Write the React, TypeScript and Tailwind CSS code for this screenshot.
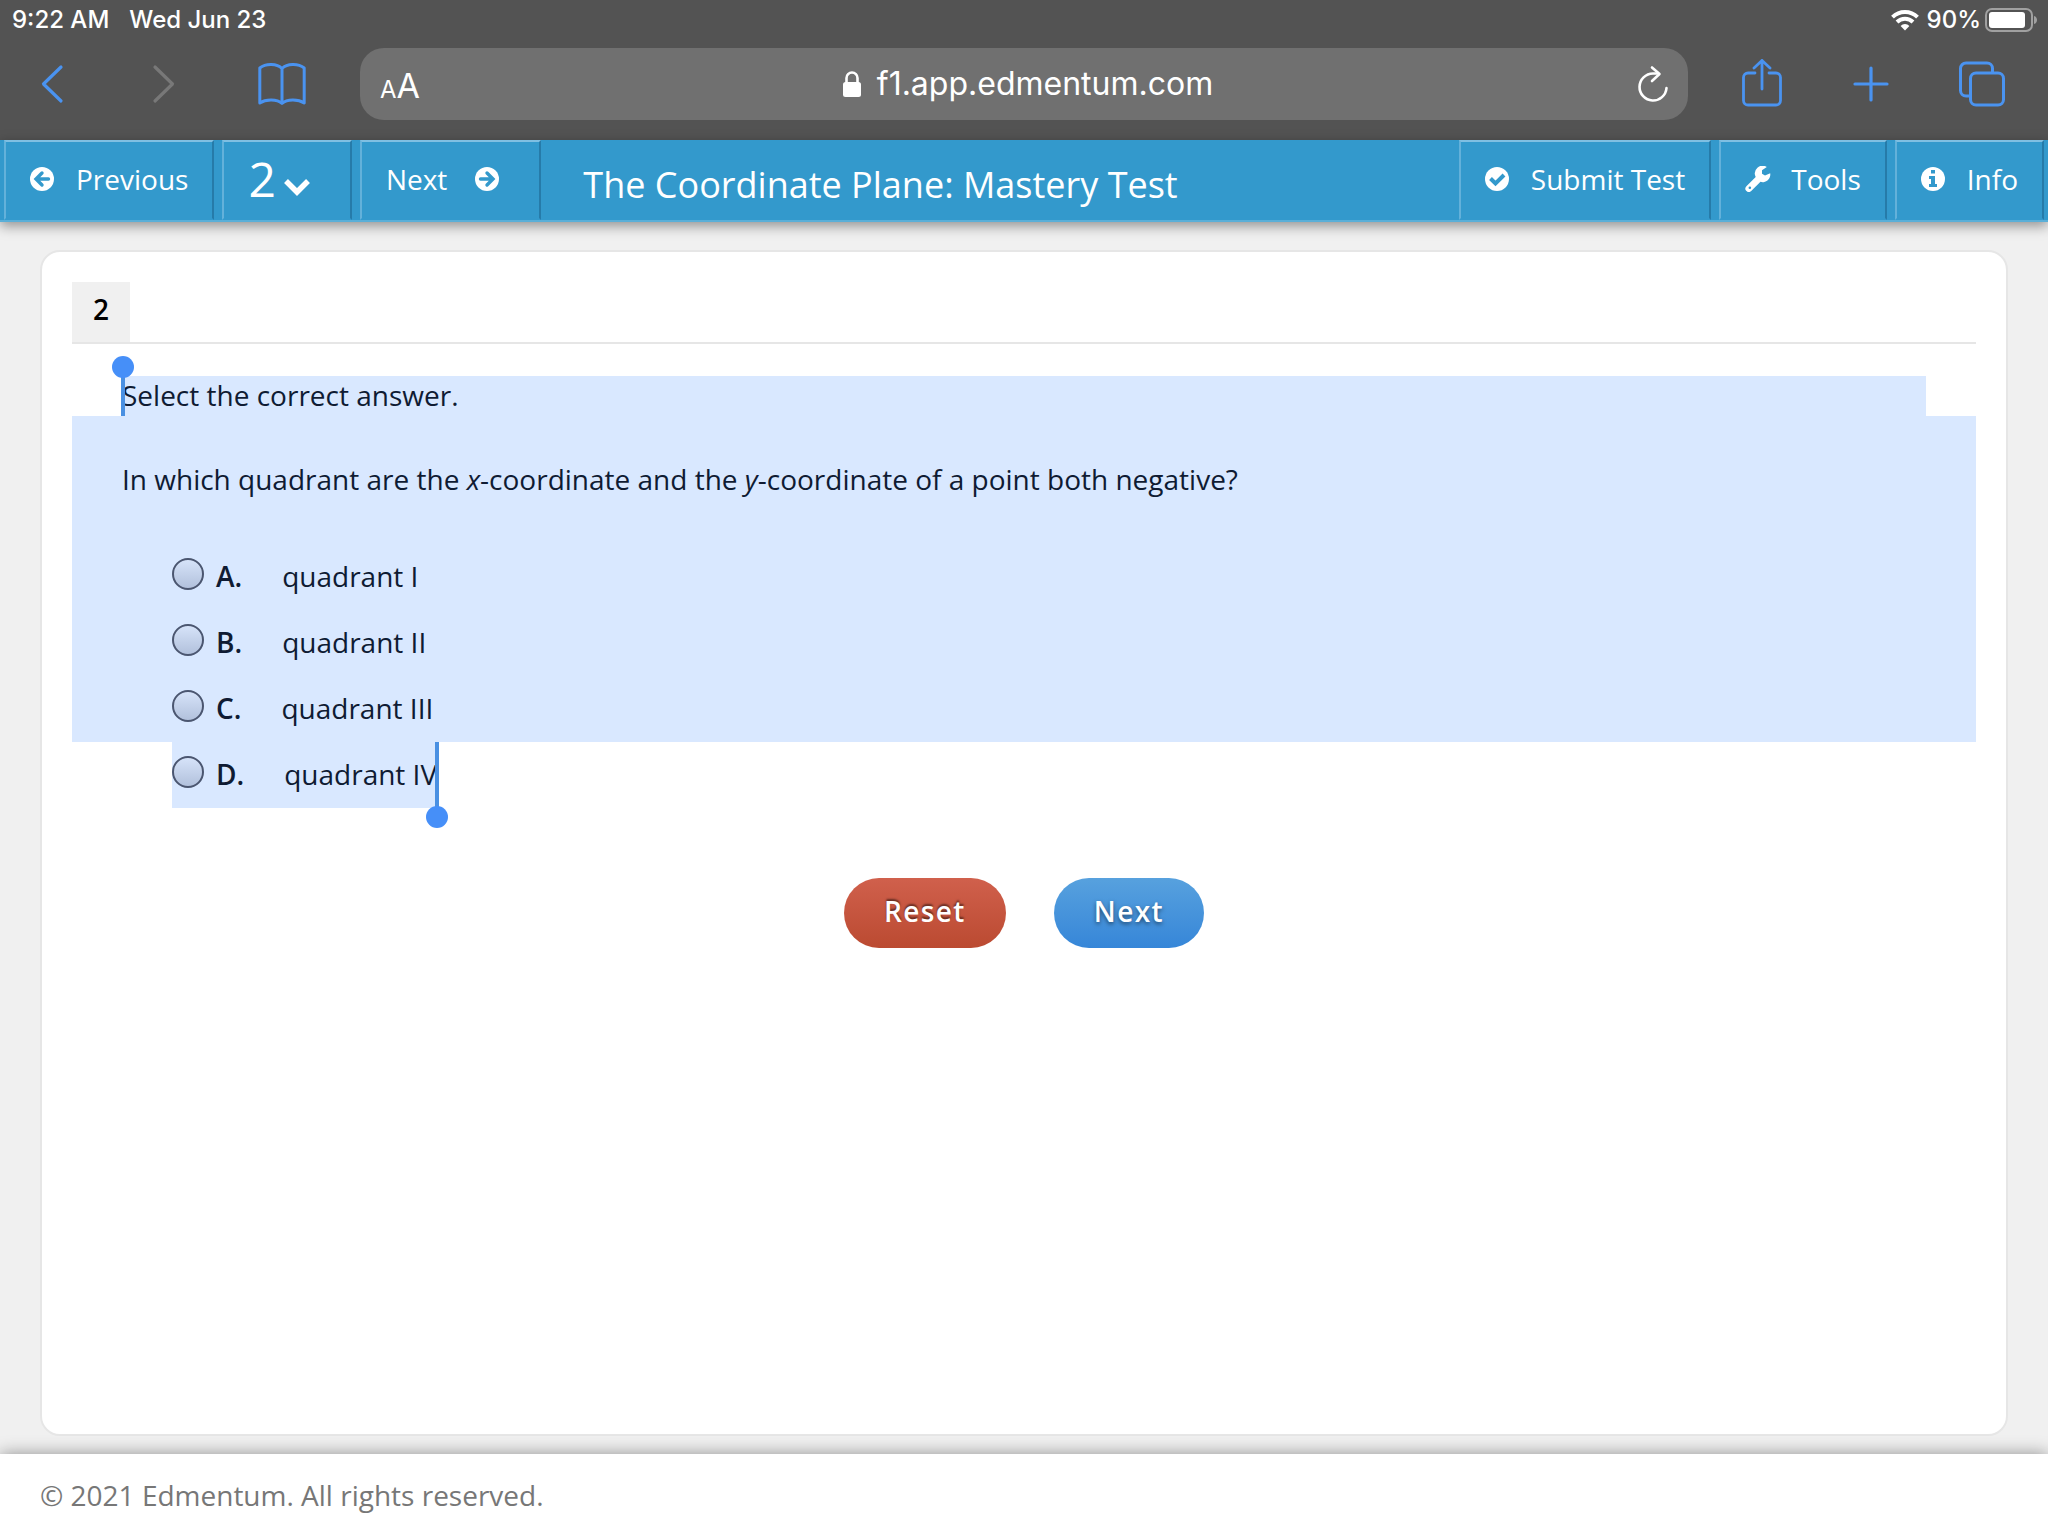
import { useState } from "react";
import type { ReactNode } from "react";

const ANSWERS = [
  { id: "A", label: "quadrant I" },
  { id: "B", label: "quadrant II" },
  { id: "C", label: "quadrant III" },
  { id: "D", label: "quadrant IV" },
];

function StatusBar() {
  return (
    <div className="flex h-10 items-center justify-between pr-[11px] pl-3 text-2xl font-medium text-white">
      <div className="flex gap-5">
        <span>9:22 AM</span>
        <span>Wed Jun 23</span>
      </div>
      <div className="flex items-center gap-1">
        <svg width="28" height="22" viewBox="0 0 28 22" fill="none" stroke="currentColor" strokeWidth="3.9" className="mr-1">
          <path d="M1.5 8.2a17.7 17.7 0 0125 0" />
          <path d="M6 13a11.3 11.3 0 0116 0" />
          <path d="M14 21.5l-4.4-4.6a6.2 6.2 0 018.8 0z" fill="currentColor" stroke="none" />
        </svg>
        <span>90%</span>
        <svg width="52" height="24" viewBox="0 0 52 24">
          <rect x="1" y="1" width="46" height="22" rx="6" fill="none" stroke="#a0a0a0" strokeWidth="2" />
          <rect x="4" y="4" width="36" height="16" rx="3" fill="#fff" />
          <path d="M49 8c4 1 4 7 0 8z" fill="#a0a0a0" />
        </svg>
      </div>
    </div>
  );
}

function BrowserBar() {
  return (
    <div className="flex h-25 items-center pt-2 pb-5 text-[#4a93f0]">
      <div className="flex w-90 shrink-0 items-center">
        <button type="button" aria-label="Back" className="ml-10">
          <svg width="24" height="40" viewBox="0 0 24 40" fill="none" stroke="currentColor" strokeWidth="3.2" strokeLinecap="round" strokeLinejoin="round">
            <path d="M21 3L3.5 20 21 37" />
          </svg>
        </button>
        <button type="button" aria-label="Forward" className="ml-22 text-[#787878]">
          <svg width="24" height="40" viewBox="0 0 24 40" fill="none" stroke="currentColor" strokeWidth="3.2" strokeLinecap="round" strokeLinejoin="round">
            <path d="M3 3l17.5 17L3 37" />
          </svg>
        </button>
        <button type="button" aria-label="Bookmarks" className="ml-20">
          <svg width="50" height="44" viewBox="0 0 50 44" fill="none" stroke="currentColor" strokeWidth="3" strokeLinejoin="round">
            <path d="M26 6.5C21 1.500 10 1 3.800 6V41C10 37 21 37 26 41.500C31 37 42 37 48.200 41V6C42 1 31 1.500 26 6.500zM26 6.500V41" />
          </svg>
        </button>
      </div>

      <div className="flex h-18 flex-1 items-center rounded-3xl bg-[#707070] px-5 text-white">
        <button type="button" aria-label="Text size" className="w-14 pt-0.5 text-left">
          <span className="text-2xl">A</span>
          <span className="text-[34px]">A</span>
        </button>
        <div className="flex flex-1 items-center justify-center gap-4 text-[32px]">
          <svg width="18" height="28" viewBox="0 0 18 28">
            <rect y="12" width="18" height="15" rx="2.5" fill="currentColor" />
            <path d="M3.5 13V8a5.500 5.500 0 0111 0v5" fill="none" stroke="currentColor" strokeWidth="2.6" />
          </svg>
          <span>f1.app.edmentum.com</span>
        </div>
        <button type="button" aria-label="Reload" className="flex w-12 justify-end">
          <svg width="32" height="38" viewBox="0 0 32 38" fill="none" stroke="currentColor" strokeWidth="2.6" strokeLinecap="round" strokeLinejoin="round">
            <path d="M30.500 23A13.500 13.500 0 1117 8.500h5" />
            <path d="M16 2.500l7.500 6.500L16 16" />
          </svg>
        </button>
      </div>

      <div className="flex w-90 shrink-0 items-center justify-between pr-[42px] pl-[53px]">
        <button type="button" aria-label="Share">
          <svg width="42" height="50" viewBox="0 0 42 50" fill="none" stroke="currentColor" strokeWidth="2.8" strokeLinecap="round" strokeLinejoin="round">
            <path d="M14 14H7a4.500 4.500 0 00-4.500 4.500v23A4.500 4.500 0 007 46h28a4.500 4.500 0 004.500-4.500v-23A4.500 4.500 0 0035 14h-7" />
            <path d="M21 30V1.500M13 9l8-7.500L29 9" />
          </svg>
        </button>
        <button type="button" aria-label="New tab">
          <svg width="36" height="36" viewBox="0 0 36 36" fill="none" stroke="currentColor" strokeWidth="3.2" strokeLinecap="round">
            <path d="M18 2v32M2 18h32" />
          </svg>
        </button>
        <button type="button" aria-label="Tabs">
          <svg width="48" height="46" viewBox="0 0 48 46" fill="none" stroke="currentColor" strokeWidth="3" strokeLinejoin="round">
            <path d="M12.500 35H8a5.500 5.500 0 01-5.500-5.500V7.500A5.500 5.500 0 018 2h21a5.500 5.500 0 015.500 5.500V12" />
            <rect x="12.500" y="12" width="33" height="32" rx="5.500" />
          </svg>
        </button>
      </div>
    </div>
  );
}

function NavButton({ children, className = "" }: { children: ReactNode; className?: string }) {
  return (
    <button
      type="button"
      className={`flex h-20 items-center border-2 border-t-[#7fbfe2] border-r-[#267ba9] border-b-transparent border-l-[#63b1da] pb-0.5 ${className}`}
    >
      {children}
    </button>
  );
}

function ArrowCircle({ flip = false }: { flip?: boolean }) {
  return (
    <svg width="24" height="24" viewBox="0 0 24 24" className={flip ? "rotate-180" : ""}>
      <circle cx="12" cy="12" r="12" fill="#fff" />
      <path d="M12 6l-6 6 6 6M7 12h11.500" fill="none" stroke="#3399cc" strokeWidth="3.4" strokeLinecap="round" />
    </svg>
  );
}

function TestNav() {
  return (
    <nav className="relative flex border-b-2 border-[#5aafd8] bg-[#3399cc] px-1 text-[28px] text-white shadow-[0_4px_12px_rgba(0,0,0,0.4)]">
      <div className="flex gap-2">
        <NavButton className="gap-[22px] px-6">
          <ArrowCircle />
          Previous
        </NavButton>
        <NavButton className="gap-2 pr-10 pl-6">
          <span className="text-5xl">2</span>
          <svg width="26" height="18" viewBox="0 0 26 18" fill="none" stroke="currentColor" strokeWidth="5.5" className="mt-4">
            <path d="M2 3l11 11L24 3" />
          </svg>
        </NavButton>
        <NavButton className="gap-7 pr-10 pl-6">
          Next
          <ArrowCircle flip />
        </NavButton>
      </div>
      <h1 className="flex flex-1 items-center pt-2.5 pl-[42px] text-4xl">The Coordinate Plane: Mastery Test</h1>
      <div className="flex gap-2">
        <NavButton className="gap-[22px] px-6">
          <svg width="24" height="24" viewBox="0 0 24 24">
            <circle cx="12" cy="12" r="12" fill="#fff" />
            <path d="M5.5 11.500l5 5L19 8" fill="none" stroke="#3399cc" strokeWidth="4" />
          </svg>
          Submit Test
        </NavButton>
        <NavButton className="gap-5 px-6">
          <svg width="26" height="26" viewBox="0 0 26 26" fill="#fff">
            <path fillRule="evenodd" d="M25.200 7.200a7.600 7.600 0 01-9.700 8.600L6.200 25a3.300 3.300 0 01-4.800-4.700l9.300-9.300A7.800 7.800 0 0121.800.9L17 4.200v3.500l3 1.800zM4.800 20.500a1.300 1.300 0 10.1 2.600 1.300 1.300 0 00-.1-2.600z" />
          </svg>
          Tools
        </NavButton>
        <NavButton className="gap-[22px] px-6">
          <svg width="24" height="24" viewBox="0 0 24 24">
            <circle cx="12" cy="12" r="12" fill="#fff" />
            <path d="M10 3h4v3.500h-4zM8 9h6v8h2v3H8v-3h2v-5H8z" fill="#3399cc" />
          </svg>
          Info
        </NavButton>
      </div>
    </nav>
  );
}

function SelectionHandle({ position }: { position: "start" | "end" }) {
  return position === "start" ? (
    <span aria-hidden className="absolute top-0 -left-px h-full w-1 bg-[#4a90e2]">
      <span className="absolute -top-5 -left-[9px] size-[22px] rounded-full bg-[#468ff8]" />
    </span>
  ) : (
    <span aria-hidden className="absolute top-0 right-0 h-full w-1 bg-[#4a90e2]">
      <span className="absolute -right-[9px] -bottom-5 size-[22px] rounded-full bg-[#468ff8]" />
    </span>
  );
}

function Question() {
  const [answer, setAnswer] = useState("");

  const renderAnswer = ({ id, label }: (typeof ANSWERS)[number]) => (
    <label key={id} className="flex h-[66px] items-center pb-0.5">
      <input
        type="radio"
        name="answer"
        value={id}
        checked={answer === id}
        onChange={() => setAnswer(id)}
        className="mr-3 mb-1 size-8 appearance-none rounded-full border-2 border-[#4b5670] bg-linear-to-b from-[#d6e3f9] to-[#b2c1dc] checked:border-8"
      />
      <span className="mr-10 font-semibold">{id}.</span>
      <span>{label}</span>
    </label>
  );

  return (
    <div className="text-[28px] text-[#0f1b33]">
      <div className="border-b-2 border-[#e6e6e6]">
        <div className="flex h-15 w-[58px] items-center justify-center bg-[#f0f0f0] pb-1.5 font-semibold text-black">2</div>
      </div>

      <p className="relative mx-[50px] mt-8 h-10 bg-[#d9e8ff] leading-[38px]">
        Select the correct answer.
        <SelectionHandle position="start" />
      </p>
      <div className="bg-[#d9e8ff]">
        <p className="px-[50px] pt-[43px] pb-[45px] leading-10">
          In which quadrant are the <i>x</i>-coordinate and the <i>y</i>-coordinate of a point both negative?
        </p>
        <div className="pl-[100px]">{ANSWERS.slice(0, 3).map(renderAnswer)}</div>
      </div>
      <div className="relative ml-[100px] w-fit bg-[#d9e8ff] pr-0.5">
        {renderAnswer(ANSWERS[3])}
        <SelectionHandle position="end" />
      </div>
    </div>
  );
}

export default function App() {
  return (
    <div className="flex min-h-screen flex-col bg-[#f0f0f0] font-['Open_Sans',sans-serif]">
      <header className="bg-[#535353] font-[Inter,sans-serif]">
        <StatusBar />
        <BrowserBar />
      </header>
      <TestNav />

      <main className="mx-10 mt-7 mb-4.5 flex-1 rounded-[20px] border-2 border-[#e6e6e6] bg-white p-[30px]">
        <Question />
        <div className="mt-[70px] flex justify-center gap-12 text-[28px] font-semibold tracking-wider text-white">
          <button
            type="button"
            className="h-[70px] rounded-full bg-linear-to-b from-[#d0604c] to-[#bb4a31] px-10 pb-1 text-shadow-[0_-2px_2px_rgba(0,0,0,0.5)]"
          >
            Reset
          </button>
          <button
            type="button"
            className="h-[70px] rounded-full bg-linear-to-b from-[#57a1de] to-[#3686d8] px-10 pb-1 text-shadow-[0_2px_4px_rgba(0,0,0,0.5)]"
          >
            Next
          </button>
        </div>
      </main>

      <footer className="relative flex h-[82px] items-center bg-white px-10 text-[28px] text-[#777777] shadow-[0_0_16px_rgba(0,0,0,0.4)]">
        © 2021 Edmentum. All rights reserved.
      </footer>
    </div>
  );
}
